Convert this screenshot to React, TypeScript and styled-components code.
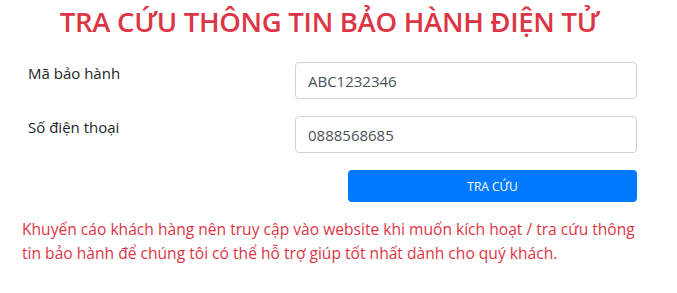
import React from "react";
import styled, { createGlobalStyle } from "styled-components";

const Global = createGlobalStyle`
  * { box-sizing: border-box; }
  body { margin: 0; background: #fff; font-family: "Open Sans", "Noto Sans", sans-serif; color: #212529; }
`;

const Page = styled.div`
  width: 677px;
  height: 293px;
  padding: 0 40px 0 22px;
  overflow: hidden;
`;

const Title = styled.h1`
  margin: 0;
  padding-top: 3px;
  text-align: center;
  color: #dc3545;
  font-size: 27.5px;
  font-weight: 600;
  line-height: 37px;
  letter-spacing: -0.3px;
`;

const Form = styled.form`
  margin-top: 22px;
  display: grid;
  grid-template-columns: 273px 1fr;
  row-gap: 17px;
`;

const Label = styled.label`
  padding-left: 6px;
  font-size: 15px;
  line-height: 22px;
`;

const Input = styled.input`
  width: 100%;
  height: 37px;
  border: 1px solid #ced4da;
  border-radius: 4px;
  padding: 0 12px;
  font-family: inherit;
  font-size: 15px;
  color: #495057;
  outline: none;
`;

const ButtonCell = styled.div`
  grid-column: 2;
  display: flex;
  justify-content: flex-end;
`;

const Button = styled.button`
  width: 289px;
  height: 32px;
  border: none;
  border-radius: 4px;
  background: #007bff;
  color: #fff;
  font-family: inherit;
  font-size: 12px;
  font-weight: 400;
`;

const Note = styled.p`
  margin: 15px 0 0;
  color: #dc3545;
  font-size: 15.6px;
  line-height: 24px;
  max-width: 620px;
`;

export default function App() {
  return (
    <Page>
      <Global />
      <Title>TRA CỨU THÔNG TIN BẢO HÀNH ĐIỆN TỬ</Title>
      <Form onSubmit={(e) => e.preventDefault()}>
        <Label>Mã bảo hành</Label>
        <Input defaultValue="ABC1232346" />
        <Label>Số điện thoại</Label>
        <Input defaultValue="0888568685" />
        <ButtonCell>
          <Button type="submit">TRA CỨU</Button>
        </ButtonCell>
      </Form>
      <Note>
        Khuyến cáo khách hàng nên truy cập vào website khi muốn kích hoạt / tra cứu thông tin bảo hành để chúng tôi có thể hỗ trợ giúp tốt nhất dành cho quý khách.
      </Note>
    </Page>
  );
}
